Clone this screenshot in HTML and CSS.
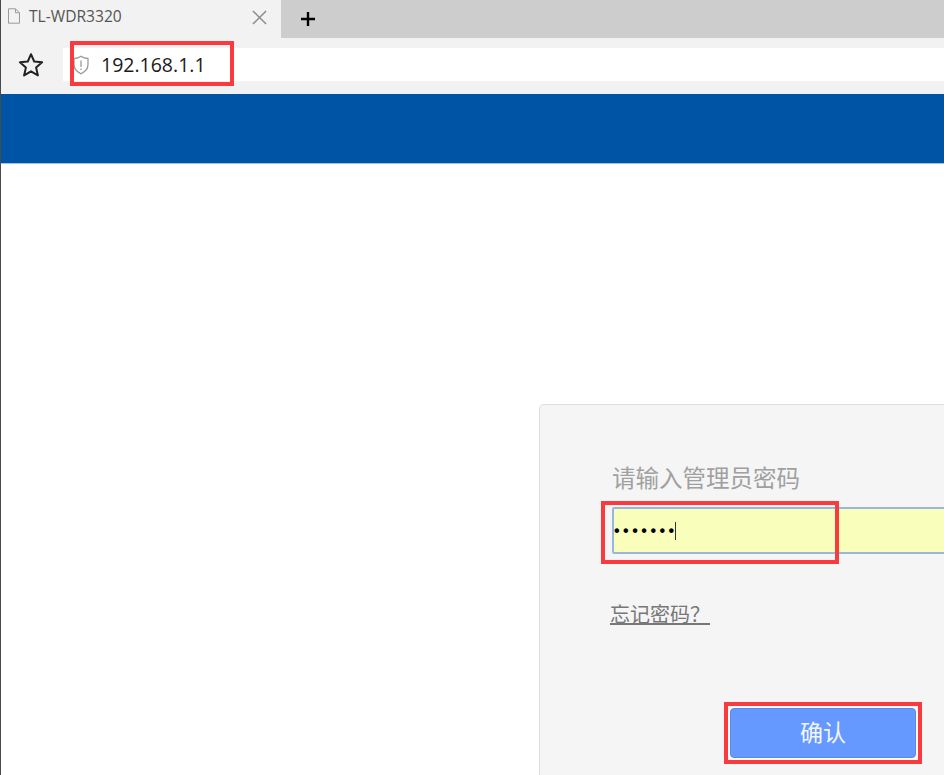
FILE: index.html
```html
<!DOCTYPE html>
<html lang="zh-CN">
<head>
<meta charset="utf-8">
<title>TL-WDR3320</title>
<link rel="stylesheet" href="styles.css">
</head>
<body>
<div class="window">
  <div class="tabstrip">
    <div class="tab">
      <svg class="page-icon" viewBox="0 0 14 16" width="14" height="16"><path d="M1.5 .8h7l4 4v10.400h-11zM8.500 .8v4h4" fill="none" stroke="#9a9a9a" stroke-width="1"/></svg>
      <span class="tab-title">TL-WDR3320</span>
      <svg class="tab-close" viewBox="0 0 16 16" width="15" height="15"><path d="M1 1l14 14M15 1L1 15" fill="none" stroke="#8a8a8a" stroke-width="1.600"/></svg>
    </div>
    <div class="new-tab"><svg viewBox="0 0 16 16" width="16" height="16"><path d="M8 1v14M1 8h14" fill="none" stroke="#000" stroke-width="2.400"/></svg></div>
  </div>
  <div class="toolbar">
    <svg class="star" viewBox="0 0 26 26" width="26" height="26"><path d="M13 2.200l3.200 7.300 7.900.8-6 5.300 1.800 7.800-6.900-4.100-6.900 4.100 1.800-7.800-6-5.300 7.900-.8z" fill="none" stroke="#222" stroke-width="2" stroke-linejoin="round"/></svg>
    <div class="address">
      <svg class="shield" viewBox="0 0 18 20" width="18" height="20"><path d="M9 1.200c2 1.500 4.500 2.200 7 2.300v6c0 4.300-2.800 7.300-7 9.300-4.200-2-7-5-7-9.300v-6c2.500-.1 5-.8 7-2.300z" fill="none" stroke="#9a9a9a" stroke-width="1.300"/><path d="M9 5.500v6.500M9 13.500v1.500" fill="none" stroke="#888" stroke-width="1.100"/></svg>
      <span class="url">192.168.1.1</span>
    </div>
  </div>
  <div class="banner"></div>
  <main class="page">
    <section class="card">
      <div class="field-label">请输入管理员密码</div>
      <div class="password"><span class="dots">•••••••</span><span class="caret"></span></div>
      <a class="forgot" href="#">忘记密码？</a>
      <div class="actions"><button class="confirm" type="button">确认</button></div>
    </section>
  </main>
</div>
<div class="mark mark-url"></div>
<div class="mark mark-password"></div>
<div class="mark mark-confirm"></div>
</body>
</html>
```
FILE: styles.css
```css
html, body {
  margin: 0;
  height: 100%;
  overflow: hidden;
  background: #fff;
}
body {
  width: 944px;
  height: 775px;
  position: relative;
  font-family: "Noto Sans CJK SC", "Liberation Sans", sans-serif;
}
.window {
  height: 775px;
  display: flex;
  flex-direction: column;
  border-left: 1px solid #4a4a4a;
  box-sizing: border-box;
  overflow: hidden;
}
.tabstrip {
  height: 38px;
  flex: none;
  display: flex;
  background: #cdcdcd;
}
.tab {
  width: 280px;
  display: flex;
  align-items: center;
  box-sizing: border-box;
  padding: 0 14px 6px 6px;
  background: #f2f2f2;
}
.page-icon { flex: none; }
.tab-title {
  margin-left: 8px;
  flex: 1;
  font: 15.6px/20px "Open Sans", "Liberation Sans", sans-serif;
  color: #555;
}
.tab-close { flex: none; margin-top: 3px; }
.new-tab {
  width: 54px;
  display: flex;
  align-items: center;
  justify-content: center;
}
.toolbar {
  height: 56px;
  flex: none;
  display: flex;
  align-items: flex-start;
  background: #f2f2f2;
  box-sizing: border-box;
  padding: 10px 0 0 17px;
}
.star { flex: none; margin-top: 4px; }
.address {
  margin-left: 19px;
  flex: 1;
  height: 33px;
  display: flex;
  align-items: center;
  background: #fff;
  padding-left: 9px;
}
.shield { flex: none; }
.url {
  margin-left: 11px;
  font: 19.500px/24px "Open Sans", "Liberation Sans", sans-serif;
  color: #1a1a1a;
}
.banner {
  height: 70px;
  flex: none;
  background: #0054a6;
  border-bottom: 1px solid #9cc4ec;
  box-sizing: border-box;
}
.page {
  flex: 1;
  background: #fff;
  padding: 240px 0 0 538px;
  min-height: 0;
}
.card {
  width: 520px;
  height: 420px;
  box-sizing: border-box;
  background: #f5f5f5;
  border: 1px solid #dedede;
  border-radius: 5px;
  padding: 56px 0 0 72px;
}
.field-label {
  font-size: 23.500px;
  line-height: 32px;
  color: #a0a0a0;
  font-family: "Noto Sans CJK SC", serif;
  font-weight: 400;
}
.password {
  margin-top: 14px;
  width: 400px;
  height: 47px;
  box-sizing: border-box;
  background: #fafebb;
  border: 2px solid #98b7e0;
  border-radius: 2px;
  display: flex;
  align-items: center;
}
.dots {
  font: bold 16px/20px "Liberation Sans", sans-serif;
  letter-spacing: 3.500px;
  color: #000;
}
.caret {
  width: 1px;
  height: 18px;
  margin-left: -3px;
  background: #333;
}
.forgot {
  display: block;
  width: 100px;
  margin: 47px 0 0 -2px;
  font-size: 20px;
  line-height: 26px;
  color: #777;
  white-space: nowrap;
  text-decoration: underline;
}
.actions {
  margin-top: 81px;
  padding-left: 118px;
}
.confirm {
  display: block;
  width: 186px;
  height: 50px;
  padding: 0 0 4px;
  background: #6699ff;
  border: 1px solid #5a8ae6;
  border-radius: 4px;
  box-shadow: 0 0 0 2px #fbfbfb;
  color: #f2f6ff;
  font-family: "Noto Sans CJK SC", serif;
  font-size: 23px;
}
.mark {
  position: absolute;
  box-sizing: border-box;
  border: 4px solid #f93a3f;
}
.mark-url { left: 70px; top: 41px; width: 164px; height: 45px; }
.mark-password { left: 601px; top: 501px; width: 238px; height: 63px; }
.mark-confirm { left: 724px; top: 702px; width: 198px; height: 62px; }
```
